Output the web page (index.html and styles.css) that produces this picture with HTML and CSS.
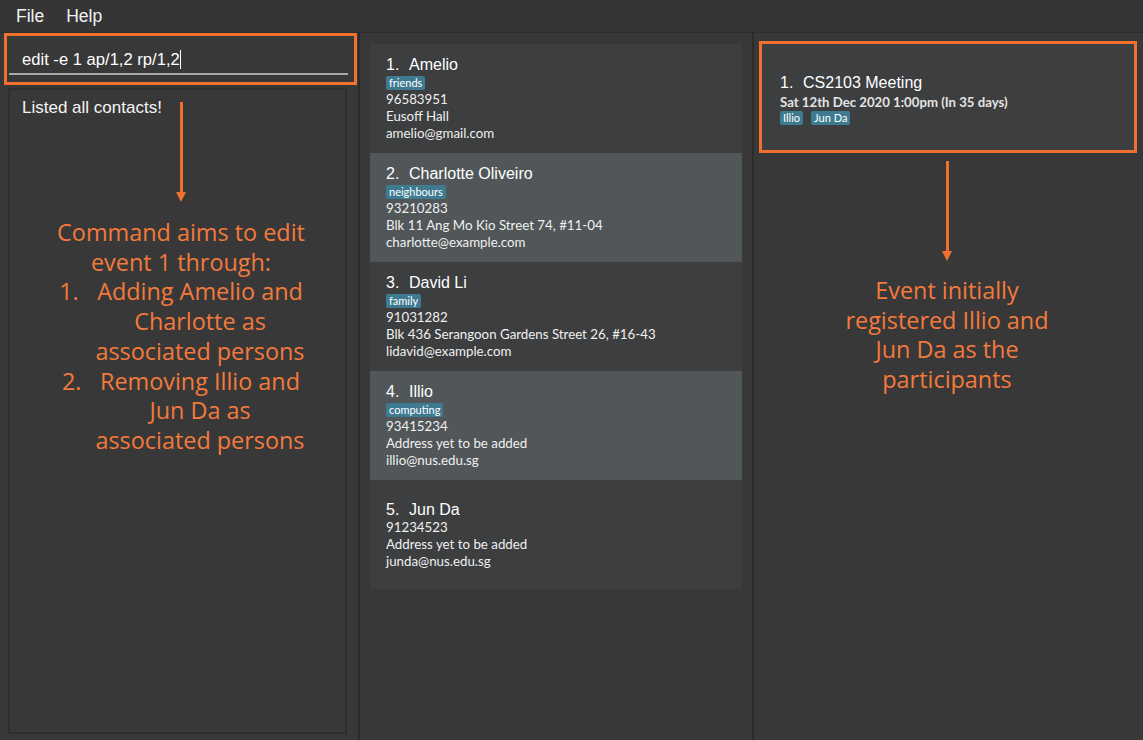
FILE: index.html
```html
<!DOCTYPE html>
<html>
<head>
<meta charset="utf-8">
<link rel="stylesheet" href="styles.css">
</head>
<body>
<div class="menubar">
  <span class="menu-item">File</span>
  <span class="menu-item">Help</span>
</div>
<div class="main">
  <div class="panel left">
    <div class="command-box">
      <div class="command-field">edit -e 1 ap/1,2 rp/1,2<span class="caret"></span></div>
    </div>
    <div class="result-box">
      <div class="result-text">Listed all contacts!</div>
    </div>
    <div class="arrow arrow-left"></div>
    <div class="note note-left">
      <div>Command aims to edit</div>
      <div>event 1 through:</div>
      <div><span class="num">1.</span>Adding Amelio and</div>
      <div class="sub">Charlotte as</div>
      <div class="sub">associated persons</div>
      <div><span class="num">2.</span>Removing Illio and</div>
      <div class="sub">Jun Da as</div>
      <div class="sub">associated persons</div>
    </div>
  </div>
  <div class="panel middle">
    <div class="card">
      <div class="name"><span class="idx">1.</span>Amelio</div>
      <div class="tags"><span class="tag">friends</span></div>
      <div class="detail">96583951</div>
      <div class="detail">Eusoff Hall</div>
      <div class="detail">amelio@gmail.com</div>
    </div>
    <div class="card alt">
      <div class="name"><span class="idx">2.</span>Charlotte Oliveiro</div>
      <div class="tags"><span class="tag">neighbours</span></div>
      <div class="detail">93210283</div>
      <div class="detail">Blk 11 Ang Mo Kio Street 74, #11-04</div>
      <div class="detail">charlotte@example.com</div>
    </div>
    <div class="card">
      <div class="name"><span class="idx">3.</span>David Li</div>
      <div class="tags"><span class="tag">family</span></div>
      <div class="detail">91031282</div>
      <div class="detail">Blk 436 Serangoon Gardens Street 26, #16-43</div>
      <div class="detail">lidavid@example.com</div>
    </div>
    <div class="card alt">
      <div class="name"><span class="idx">4.</span>Illio</div>
      <div class="tags"><span class="tag">computing</span></div>
      <div class="detail">93415234</div>
      <div class="detail">Address yet to be added</div>
      <div class="detail">illio@nus.edu.sg</div>
    </div>
    <div class="card">
      <div class="name"><span class="idx">5.</span>Jun Da</div>
      <div class="detail">91234523</div>
      <div class="detail">Address yet to be added</div>
      <div class="detail">junda@nus.edu.sg</div>
    </div>
  </div>
  <div class="panel right">
    <div class="event-card">
      <div class="name event-name"><span class="idx">1.</span>CS2103 Meeting</div>
      <div class="event-date">Sat 12th Dec 2020 1:00pm (In 35 days)</div>
      <div class="tags event-tags"><span class="tag">Illio</span><span class="tag">Jun Da</span></div>
    </div>
    <div class="arrow arrow-right"></div>
    <div class="note note-right">
      <div>Event initially</div>
      <div>registered Illio and</div>
      <div>Jun Da as the</div>
      <div>participants</div>
    </div>
  </div>
</div>
</body>
</html>
```

FILE: styles.css
```css
html, body {
  margin: 0;
  padding: 0;
}
body {
  width: 1143px;
  height: 740px;
  overflow: hidden;
  background: #383838;
  font-family: "Liberation Sans", Arial, sans-serif;
  color: #ffffff;
}
.menubar {
  height: 33px;
  background: #353535;
  border-bottom: 1px solid #2c2c2c;
  display: flex;
  align-items: center;
  padding-left: 16px;
  gap: 22px;
  box-sizing: border-box;
}
.menu-item {
  font-size: 17.5px;
  color: #f2f2f2;
}
.main {
  display: flex;
  height: 707px;
}
.panel {
  position: relative;
  box-sizing: border-box;
}
.left {
  width: 360px;
  border-right: 2px solid #2b2b2b;
  padding: 0 0 0 4px;
}
.middle {
  width: 394px;
  border-right: 2px solid #2b2b2b;
  padding: 11px 10px 0 10px;
  display: flex;
  flex-direction: column;
}
.right {
  flex: 1;
  padding: 8px 6px 0 5px;
}
.command-box {
  width: 353px;
  height: 52px;
  border: 3px solid #f2702f;
  box-sizing: border-box;
  padding: 0 6px 0 2px;
}
.command-field {
  height: 39px;
  border-bottom: 2px solid #a9a9a9;
  box-sizing: border-box;
  font-size: 16.6px;
  color: #ffffff;
  padding: 14px 0 0 13px;
  line-height: 18px;
}
.caret {
  display: inline-block;
  width: 1px;
  height: 19px;
  background: #ffffff;
  vertical-align: -4px;
}
.result-box {
  margin: 3px 0 0 4px;
  width: 339px;
  height: 646px;
  border: 2px solid #2e2e2e;
  box-sizing: border-box;
  padding: 8px 0 0 12px;
}
.result-text {
  font-size: 17px;
  line-height: 20px;
  color: #f5f5f5;
}
.arrow {
  position: absolute;
  width: 3px;
  background: #f2702f;
}
.arrow::after {
  content: "";
  position: absolute;
  left: -4px;
  bottom: -9px;
  border-left: 5.5px solid transparent;
  border-right: 5.5px solid transparent;
  border-top: 10px solid #f2702f;
}
.arrow-left {
  left: 180px;
  top: 69px;
  height: 91px;
}
.arrow-right {
  left: 192px;
  top: 128px;
  height: 91px;
}
.note {
  position: absolute;
  font-family: "Open Sans", "Noto Sans", sans-serif;
  font-size: 23.4px;
  line-height: 29.7px;
  color: #f37a3c;
  text-align: center;
  white-space: nowrap;
}
.note-left {
  left: 31px;
  width: 300px;
  top: 185px;
}
.note .sub {
  padding-left: 38px;
}
.note .num {
  display: inline-block;
  width: 38px;
  text-align: left;
}
.note-right {
  left: 43px;
  width: 300px;
  top: 243px;
}
.card {
  height: 109px;
  background: #3c3e3f;
  padding-left: 16px;
  display: flex;
  flex-direction: column;
  justify-content: center;
  flex: none;
}
.card.alt {
  background: #515658;
}
.name {
  font-size: 16px;
  line-height: 19px;
  color: #ffffff;
}
.idx {
  display: inline-block;
  width: 23px;
}
.tags {
  display: flex;
  gap: 8px;
  margin: 2px 0 1px;
}
.tag {
  background: #3e7b91;
  color: #ffffff;
  font-family: "Lato", "Open Sans", sans-serif;
  font-size: 11px;
  line-height: 14px;
  padding: 0 3px;
  border-radius: 2px;
}
.detail {
  font-family: "Lato", "Open Sans", sans-serif;
  font-size: 13.3px;
  line-height: 17px;
  color: #f0f0f0;
}
.event-card {
  height: 112px;
  border: 3px solid #f2702f;
  background: #3c3e3f;
  box-sizing: border-box;
  padding-left: 18px;
  display: flex;
  flex-direction: column;
  justify-content: center;
  padding-top: 5px;
}
.event-name {
  margin-bottom: 2px;
}
.event-date {
  font-family: "Lato", "Open Sans", sans-serif;
  font-weight: 700;
  font-size: 13.2px;
  line-height: 16px;
  color: #e4e4e4;
}
.event-tags {
  margin-top: 1px;
}
```
